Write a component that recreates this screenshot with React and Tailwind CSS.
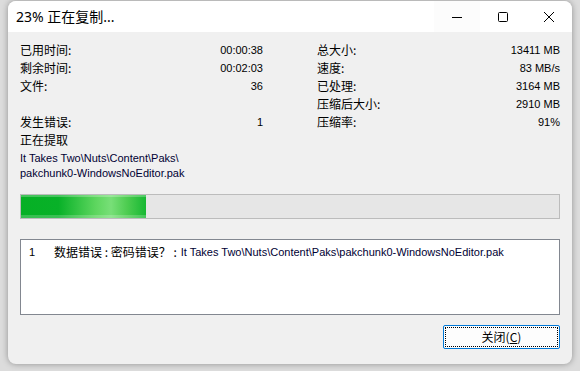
import React from 'react';

const LEFT = [
  ['已用时间:', '00:00:38'],
  ['剩余时间:', '00:02:03'],
  ['文件:', '36'],
  ['', ''],
  ['发生错误:', '1'],
];

const RIGHT = [
  ['总大小:', '13411 MB'],
  ['速度:', '83 MB/s'],
  ['已处理:', '3164 MB'],
  ['压缩后大小:', '2910 MB'],
  ['压缩率:', '91%'],
];

const cjk = { fontFamily: '"Noto Sans CJK SC", "Liberation Sans", sans-serif' };
const num = { fontFamily: '"Liberation Sans", Arial, sans-serif' };

const Row = ({ label, value }) => (
  <div className="flex items-center justify-between h-[18px] text-black">
    <span className="text-[12px]" style={cjk}>{label}</span>
    <span className="text-[11px]" style={num}>{value}</span>
  </div>
);

export default function App() {
  return (
    <div className="w-[580px] h-[371px] bg-[#dcdcdc] overflow-hidden pt-[1px] pl-[8px]">
      <div className="w-[564px] h-[363px] bg-[#f0f0f0] rounded-[8px] overflow-hidden shadow-[0_0_6px_rgba(0,0,0,0.35)] flex flex-col">

        {/* title bar */}
        <div className="h-[31px] bg-white flex items-center shrink-0">
          <span className="pl-[8px] text-[14px] text-black flex-1" style={{ fontFamily: '"Noto Sans", "Noto Sans CJK SC", sans-serif' }}>
            23% 正在复制...
          </span>
          <div className="w-[46px] h-full flex items-center justify-center bg-[#fcfcfc]">
            <svg width="10" height="10" viewBox="0 0 10 10"><path d="M0 5.5h10" stroke="#000" strokeWidth="1" /></svg>
          </div>
          <div className="w-[46px] h-full flex items-center justify-center">
            <svg width="10" height="10" viewBox="0 0 10 10"><rect x="0.5" y="0.5" width="9" height="9" rx="1" fill="none" stroke="#000" strokeWidth="1" /></svg>
          </div>
          <div className="w-[46px] h-full flex items-center justify-center">
            <svg width="10" height="10" viewBox="0 0 10 10"><path d="M0 0L10 10M10 0L0 10" stroke="#000" strokeWidth="1" /></svg>
          </div>
        </div>

        {/* body */}
        <div className="px-[12px] pt-[9px] flex flex-col">
          <div className="flex gap-[54px]">
            <div className="w-[243px] flex flex-col">
              {LEFT.map(([l, v], i) => <Row key={i} label={l} value={v} />)}
              <div className="h-[18px] flex items-center text-[12px] text-black" style={cjk}>正在提取</div>
            </div>
            <div className="w-[243px] flex flex-col">
              {RIGHT.map(([l, v], i) => <Row key={i} label={l} value={v} />)}
            </div>
          </div>

          <div className="mt-[2px] text-[11px] leading-[15px] text-[#000033]" style={num}>
            <div>It Takes Two\Nuts\Content\Paks\</div>
            <div>pakchunk0-WindowsNoEditor.pak</div>
          </div>

          {/* progress */}
          <div className="mt-[13px] h-[25px] border border-[#bcbcbc] bg-[#e6e6e6]">
            <div className="relative h-full w-[125px] bg-[linear-gradient(to_right,#06b025_0%,#08b128_30%,#5ed65f_60%,#78df78_72%,#4dcc50_85%,#17b833_100%)]">
              <div className="absolute inset-x-0 top-0 h-[2px] bg-white/25" />
              <div className="absolute inset-x-0 bottom-0 h-[3px] bg-white/20" />
            </div>
          </div>

          {/* error list */}
          <div className="mt-[20px] h-[76px] border border-[#828790] bg-white px-[8px] py-[4px]">
            <div className="flex items-center text-black h-[16px]">
              <span className="w-[25px] text-[11px]" style={num}>1</span>
              <span className="text-[12px]" style={cjk}>数据错误 : 密码错误？ :</span>
              <span className="ml-[4px] text-[11px] text-[#000033]" style={num}>It Takes Two\Nuts\Content\Paks\pakchunk0-WindowsNoEditor.pak</span>
            </div>
          </div>

          {/* button */}
          <div className="mt-[10px] flex justify-end">
            <button className="w-[117px] h-[24px] border border-[#0078d7] rounded-[2px] bg-[#fdfdfd] p-[1px]">
              <div className="w-full h-full border border-dotted border-black flex items-center justify-center text-[12px] text-black" style={cjk}>
                关闭(<span className="underline">C</span>)
              </div>
            </button>
          </div>
        </div>
      </div>
    </div>
  );
}
